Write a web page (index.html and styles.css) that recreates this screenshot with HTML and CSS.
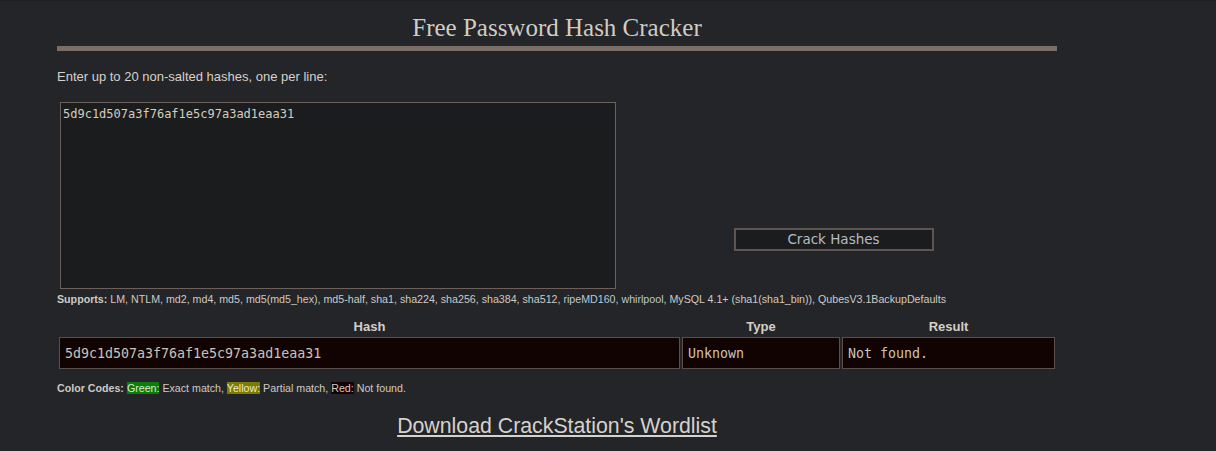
FILE: index.html
```html
<!DOCTYPE html>
<html>
<head>
<meta charset="utf-8">
<link rel="stylesheet" href="styles.css">
</head>
<body>
<div class="page">
  <h1 class="title">Free Password Hash Cracker</h1>
  <div class="rule"></div>
  <p class="intro">Enter up to 20 non-salted hashes, one per line:</p>
  <div class="input-row">
    <textarea class="hashes">5d9c1d507a3f76af1e5c97a3ad1eaa31</textarea>
    <div class="btn-area">
      <button class="crack">Crack Hashes</button>
    </div>
  </div>
  <p class="supports"><b>Supports:</b> LM, NTLM, md2, md4, md5, md5(md5_hex), md5-half, sha1, sha224, sha256, sha384, sha512, <span class="lnk">ripeMD160</span>, <span class="lnk">whirlpool</span>, MySQL 4.1+ (sha1(sha1_bin)), QubesV3.1BackupDefaults</p>
  <table class="results">
    <thead>
      <tr><th class="c-hash">Hash</th><th class="c-type">Type</th><th class="c-res">Result</th></tr>
    </thead>
    <tbody>
      <tr><td>5d9c1d507a3f76af1e5c97a3ad1eaa31</td><td>Unknown</td><td>Not found.</td></tr>
    </tbody>
  </table>
  <p class="codes"><b>Color Codes:</b> <span class="green">Green:</span> Exact match, <span class="yellow">Yellow:</span> Partial match, <span class="red">Red:</span> Not found.</p>
  <div class="dl"><a href="#">Download CrackStation's Wordlist</a></div>
</div>
</body>
</html>
```

FILE: styles.css
```css
html, body {
  margin: 0;
  padding: 0;
  background: #232528;
}
body {
  border-top: 1px solid #1d1f21;
  font-family: "Liberation Sans", Arial, sans-serif;
  color: #d6d1cb;
}
.page {
  width: 1000px;
  margin-left: 57px;
}
.title {
  margin: 0;
  padding-top: 12px;
  font-family: "Liberation Serif", "Times New Roman", serif;
  font-weight: normal;
  font-size: 25px;
  line-height: 30px;
  text-align: center;
  color: #d2ccc5;
}
.rule {
  margin-top: 3px;
  height: 5px;
  background: #7b6e67;
}
.intro {
  margin: 18px 0 0;
  font-size: 13px;
  line-height: 16px;
}
.input-row {
  display: flex;
  margin-top: 17px;
  padding-left: 3px;
}
.hashes {
  box-sizing: border-box;
  width: 556px;
  height: 187px;
  margin: 0;
  padding: 4px 2px;
  background: #1b1c1e;
  border: 1px solid #6d605a;
  color: #d5cdbf;
  font-family: "DejaVu Sans Mono", monospace;
  font-size: 12px;
  line-height: 15px;
  resize: none;
  outline: none;
}
.btn-area {
  flex: 1;
  display: flex;
  justify-content: center;
  align-items: flex-start;
  padding-top: 126px;
}
.crack {
  box-sizing: border-box;
  width: 200px;
  height: 23px;
  margin: 0 0 0 -6px;
  padding: 0;
  background: #1b1c1e;
  border: 2px solid #5e5450;
  color: #b3bcc4;
  font-family: "DejaVu Sans", sans-serif;
  font-size: 13.5px;
  line-height: 19px;
}
.supports {
  margin: 3px 0 0;
  font-size: 10.667px;
  line-height: 14px;
  color: #cfcac4;
}
.supports b, .codes b {
  color: #cfcac4;
}
.lnk {
  color: #b9c8d6;
}
.results {
  width: 1000px;
  margin-top: 11px;
  border-spacing: 2px;
  border-collapse: separate;
  table-layout: fixed;
}
.results th {
  box-sizing: border-box;
  font-size: 13px;
  line-height: 15px;
  padding: 0 0 1px;
  font-weight: bold;
  color: #d4cfc9;
}
.c-hash { width: 621px; }
.c-type { width: 158px; }
.c-res { width: 213px; }
.results td {
  box-sizing: border-box;
  height: 32px;
  padding: 0 5px;
  background: #120303;
  border: 1px solid #5a4f4b;
  color: #cbc3b8;
  font-family: "DejaVu Sans Mono", monospace;
  font-size: 13.3px;
  white-space: nowrap;
}
.codes {
  margin: 10px 0 0;
  font-size: 10.667px;
  line-height: 14px;
  color: #cfcac4;
}
.green { background: #0b7d0b; color: #d7ecd2; }
.yellow { background: #7b7a03; color: #ecebc6; }
.red { background: #190101; color: #d8c8c2; }
.dl {
  margin-top: 18px;
  text-align: center;
  font-size: 21.3px;
  line-height: 26px;
}
.dl a {
  color: #d6d2cd;
  text-decoration: underline;
}
```
